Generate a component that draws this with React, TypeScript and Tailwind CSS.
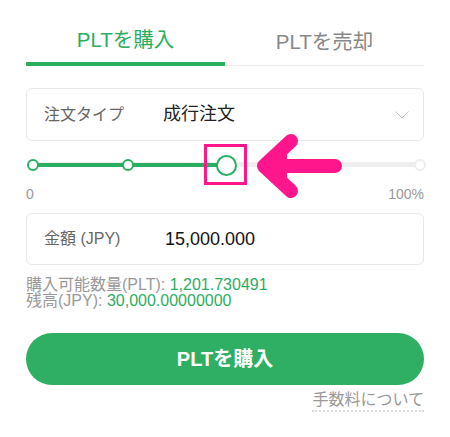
import React from "react";

export default function App() {
  return (
    <div
      className="relative w-[450px] h-[437px] bg-white px-[26px] overflow-hidden"
      style={{ fontFamily: '"Liberation Sans", "Noto Sans CJK JP", sans-serif' }}
    >
      {/* Tabs */}
      <div className="flex h-[66px]">
        <div className="flex-1 flex items-center justify-center pt-[19px] border-b-4 border-[#2aae61] text-[20.5px] text-[#2aae61]">
          PLTを購入
        </div>
        <div className="flex-1 flex items-center justify-center pt-[19px] border-b border-[#ececec] text-[20.5px] text-[#888888]">
          PLTを売却
        </div>
      </div>

      {/* Order type select */}
      <div className="mt-[22px] h-[53px] border border-[#e8e8e8] rounded-[6px] px-[17px] flex items-center">
        <span className="w-[119px] text-[16px] text-[#666666]">注文タイプ</span>
        <span className="flex-1 text-[18px] text-[#222222]">成行注文</span>
        <svg width="14" height="8" viewBox="0 0 14 8" className="mr-[-3px]">
          <path d="M0.5 0.5 L7 7 L13.5 0.5" fill="none" stroke="#c4c4c4" strokeWidth="1" />
        </svg>
      </div>

      {/* Slider */}
      <div className="relative mt-[14px] h-[20px]">
        <div className="absolute left-[7px] right-[6px] top-[7px] h-[5px] rounded-full bg-[#eeeeee]" />
        <div className="absolute left-[7px] w-[194px] top-[8px] h-[4px] bg-[#2aae61]" />
        <div className="absolute left-[1px] top-[4px] w-[12px] h-[12px] rounded-full bg-white border-2 border-[#2aae61]" />
        <div className="absolute left-[96px] top-[4px] w-[12px] h-[12px] rounded-full bg-white border-2 border-[#2aae61]" />
        <div className="absolute left-[294px] top-[4px] w-[12px] h-[12px] rounded-full bg-white border-2 border-[#eeeeee]" />
        <div className="absolute left-[388px] top-[4px] w-[12px] h-[12px] rounded-full bg-white border-2 border-[#eeeeee]" />
        <div className="absolute left-[190px] top-[0px] w-[21px] h-[21px] rounded-full bg-white border-2 border-[#2aae61]" />
      </div>
      <div className="mt-[11px] flex justify-between text-[14px] leading-[16px] text-[#999999]">
        <span>0</span>
        <span>100%</span>
      </div>

      {/* Amount */}
      <div className="mt-[11px] h-[52px] border border-[#e8e8e8] rounded-[6px] px-[17px] flex items-center">
        <span className="w-[121px] text-[16px] text-[#666666]">金額 (JPY)</span>
        <span className="text-[18px] text-[#111111]">15,000.000</span>
      </div>

      {/* Info */}
      <div className="mt-[12px] text-[16px] leading-[16px] text-[#999999]">
        <div>
          購入可能数量(PLT): <span className="text-[#2aae61]">1,201.730491</span>
        </div>
        <div>
          残高(JPY): <span className="text-[#2aae61]">30,000.00000000</span>
        </div>
      </div>

      {/* Button */}
      <button className="mt-[24px] w-full h-[52px] rounded-full bg-[#2eaf63] text-white text-[20px] font-bold flex items-center justify-center">
        PLTを購入
      </button>

      <div className="mt-[5px] flex justify-end">
        <span className="text-[16px] leading-[20px] text-[#999999] border-b-2 border-dotted border-[#dddddd]">
          手数料について
        </span>
      </div>

      {/* Annotation overlay */}
      <svg
        className="absolute left-0 top-0 pointer-events-none"
        width="450"
        height="437"
        viewBox="0 0 450 437"
      >
        <rect x="205.5" y="145.5" width="40" height="38" fill="none" stroke="#ff168c" strokeWidth="3" />
        <line x1="272" y1="166" x2="335" y2="166" stroke="#ff168c" strokeWidth="14" strokeLinecap="round" />
        <polygon points="264,166 287,146 287,186" fill="#ff168c" />
        <polyline
          points="291,141 264,166 291,191"
          fill="none"
          stroke="#ff168c"
          strokeWidth="14"
          strokeLinecap="round"
          strokeLinejoin="round"
        />
      </svg>
    </div>
  );
}
